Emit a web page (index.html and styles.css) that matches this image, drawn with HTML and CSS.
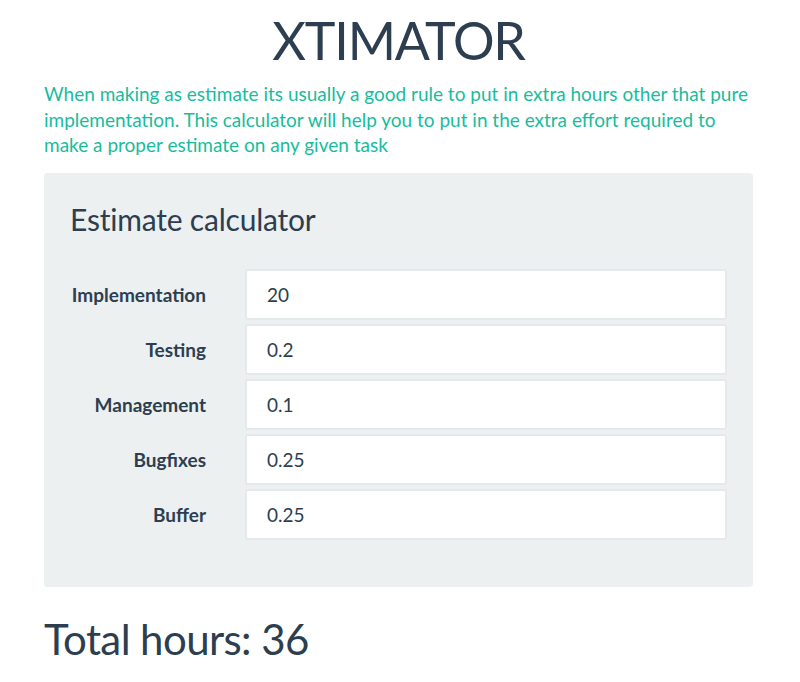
FILE: index.html
```html
<!DOCTYPE html>
<html>
<head>
<meta charset="utf-8">
<link rel="stylesheet" href="styles.css">
</head>
<body>
<div class="container">
  <h1 class="title">XTIMATOR</h1>
  <p class="intro">When making as estimate its usually a good rule to put in extra hours other that pure implementation. This calculator will help you to put in the extra effort required to make a proper estimate on any given task</p>
  <div class="well">
    <h2 class="legend">Estimate calculator</h2>
    <div class="form">
      <label class="label">Implementation</label>
      <div class="input">20</div>
      <label class="label">Testing</label>
      <div class="input">0.2</div>
      <label class="label">Management</label>
      <div class="input">0.1</div>
      <label class="label">Bugfixes</label>
      <div class="input">0.25</div>
      <label class="label">Buffer</label>
      <div class="input">0.25</div>
    </div>
  </div>
  <h2 class="total">Total hours: 36</h2>
</div>
</body>
</html>
```
FILE: styles.css
```css
html, body {
  margin: 0;
  padding: 0;
  background: #ffffff;
}
body {
  font-family: Lato, "Open Sans", sans-serif;
  color: #2c3e50;
}
.container {
  width: 709px;
  margin-left: 44px;
}
.title {
  margin: 0;
  padding-top: 11px;
  font-size: 52px;
  font-weight: 400;
  line-height: 58px;
  text-align: center;
  letter-spacing: -1.2px;
}
.intro {
  margin: 12px 0 0 0;
  font-size: 19px;
  line-height: 25.5px;
  color: #18bc9c;
}
.well {
  margin-top: 15px;
  background: #ecf0f1;
  border-radius: 4px;
  padding: 26px 26px 47px 26px;
}
.legend {
  margin: 0;
  font-size: 30px;
  font-weight: 400;
  line-height: 40px;
  letter-spacing: -0.2px;
}
.form {
  margin-top: 30px;
  display: grid;
  grid-template-columns: 136px 1fr;
  column-gap: 39px;
  row-gap: 4px;
  align-items: center;
}
.label {
  text-align: right;
  font-weight: 700;
  font-size: 19px;
}
.input {
  height: 47px;
  background: #ffffff;
  border: 2px solid #e4e9ec;
  border-radius: 3px;
  padding: 0 20px;
  display: flex;
  align-items: center;
  font-size: 19px;
  color: #2c3e50;
}
.total {
  margin: 27px 0 0 0;
  font-size: 42px;
  font-weight: 400;
  line-height: 50px;
  letter-spacing: -0.6px;
}
```
